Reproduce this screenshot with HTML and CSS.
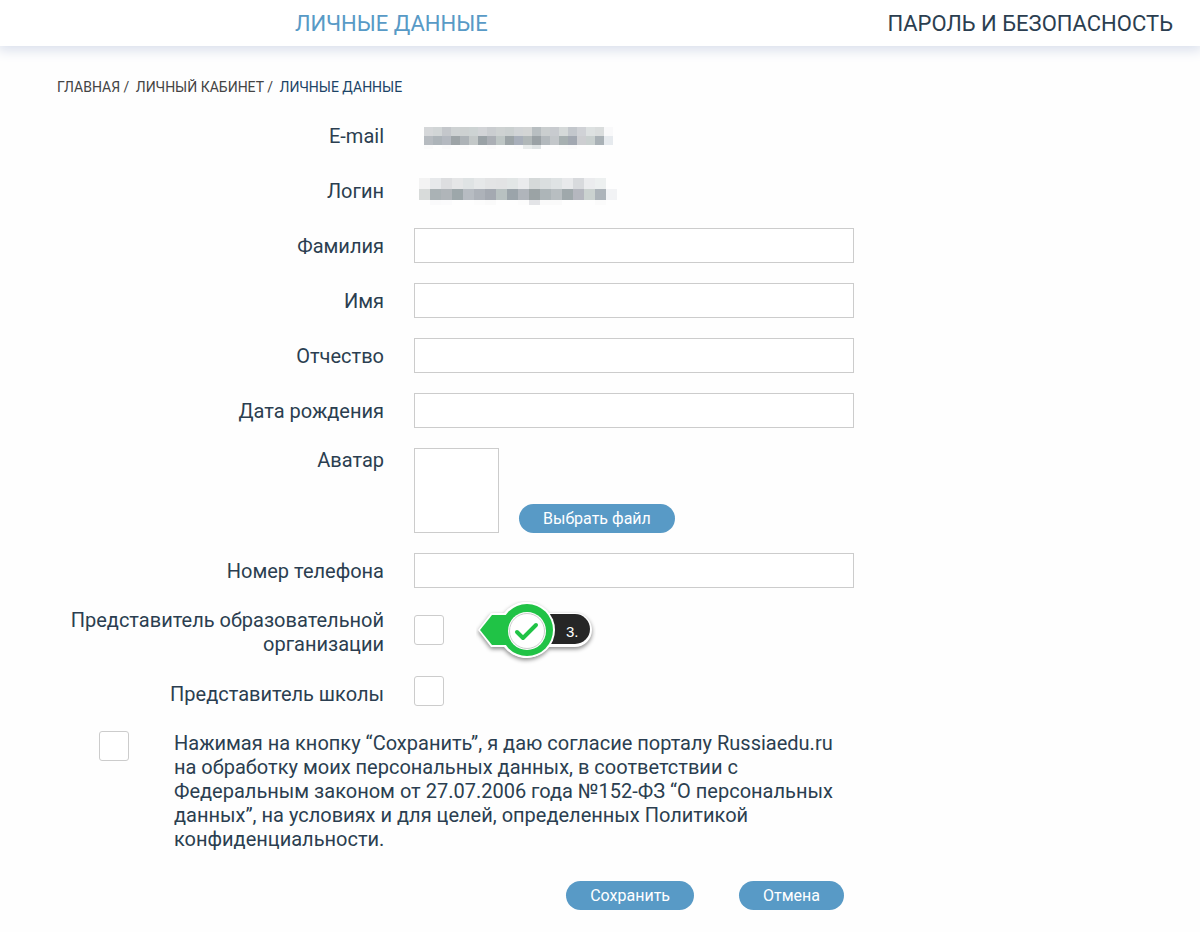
FILE: index.html
```html
<!DOCTYPE html>
<html lang="ru">
<head>
<meta charset="UTF-8">
<meta name="viewport" content="width=device-width, initial-scale=1.0">
<title>Личные данные</title>
<link rel="stylesheet" href="styles.css">
</head>
<body>

<nav class="tabs">
  <a href="#" class="active">Личные данные</a>
  <a href="#">Пароль и безопасность</a>
</nav>

<main class="content">
  <div class="breadcrumbs">
    <a href="#">Главная</a> <span>/</span>
    <a href="#">Личный кабинет</a> <span>/</span>
    <a href="#" class="current">Личные данные</a>
  </div>

  <form class="profile">
    <div class="row">
      <span class="label">E-mail</span>
      <svg class="hiddenValue" id="email" width="210" height="35" shape-rendering="crispEdges" aria-hidden="true"></svg>
    </div>
    <div class="row">
      <span class="label">Логин</span>
      <svg class="hiddenValue" id="login" width="210" height="35" shape-rendering="crispEdges" aria-hidden="true"></svg>
    </div>
    <div class="row">
      <label class="label" for="surname">Фамилия</label>
      <input type="text" class="field" id="surname">
    </div>
    <div class="row">
      <label class="label" for="name">Имя</label>
      <input type="text" class="field" id="name">
    </div>
    <div class="row">
      <label class="label" for="patronymic">Отчество</label>
      <input type="text" class="field" id="patronymic">
    </div>
    <div class="row">
      <label class="label" for="birthday">Дата рождения</label>
      <input type="text" class="field" id="birthday">
    </div>
    <div class="row rowTop">
      <label class="label" for="avatar">Аватар</label>
      <div class="avatarBox">
        <div class="avatar"></div>
        <button type="button" class="btn" id="avatar">Выбрать файл</button>
      </div>
    </div>
    <div class="row">
      <label class="label" for="phone">Номер телефона</label>
      <input type="text" class="field" id="phone">
    </div>
    <div class="row">
      <label class="label" for="eduRep">Представитель образовательной организации</label>
      <div class="checkBox">
        <input type="checkbox" class="check" id="eduRep">
        <div class="step">
          <svg width="120" height="64" viewBox="0 0 120 64" aria-hidden="true">
            <g class="stepShape">
              <path fill="#fff" d="M60 12H99A17 17 0 0 1 99 46H60Z"/>
              <path fill="#fff" d="M2 29 15 12H28A28 28 0 1 1 28 46H15Z"/>
            </g>
            <path fill="#262626" d="M60 13H99A15 15 0 0 1 99 43H60Z"/>
            <circle cx="51" cy="29" r="28" fill="#fff"/>
            <path fill="#20c346" d="M4 29 16 14H32V44H16Z"/>
            <circle cx="51" cy="29" r="26" fill="#20c346"/>
            <circle cx="51" cy="30" r="19" fill="#fff"/>
            <circle cx="51" cy="30" r="17.5" fill="none" stroke="#ccc"/>
            <path d="M41 31 47 37 60 24" fill="none" stroke="#20c346" stroke-width="4" stroke-linecap="round" stroke-linejoin="round"/>
          </svg>
          <span class="stepNumber">3.</span>
        </div>
      </div>
    </div>
    <div class="row rowShort">
      <label class="label" for="schoolRep">Представитель школы</label>
      <input type="checkbox" class="check" id="schoolRep">
    </div>
    <div class="consent">
      <input type="checkbox" class="check" id="consent">
      <label for="consent">Нажимая на кнопку “Сохранить”, я даю согласие порталу Russiaedu.ru на обработку моих персональных данных, в соответствии с Федеральным законом от 27.07.2006 года №152-ФЗ “О персональных данных”, на условиях и для целей, определенных Политикой конфиденциальности.</label>
    </div>
    <div class="actions">
      <button type="submit" class="btn">Сохранить</button>
      <button type="reset" class="btn">Отмена</button>
    </div>
  </form>
</main>

<script src="mosaic.js"></script>
</body>
</html>
```
FILE: styles.css
```css
* {
  box-sizing: border-box;
}
body {
  margin: 0;
  background-color: #fefefe;
  color: #2b3e50;
  font-family: Roboto, sans-serif;
  font-size: 20px;
  line-height: 24px;
}
a {
  color: inherit;
  text-decoration: none;
}
.tabs {
  display: flex;
  justify-content: space-between;
  padding: 12px 27px 10px 295px;
  background-color: #fff;
  box-shadow: 0 2px 12px 2px #d8deeb;
  font-size: 22px;
  text-transform: uppercase;
}
.tabs .active {
  color: #589ac6;
}
.content {
  padding: 31px 57px 22px;
}
.breadcrumbs {
  color: #444;
  font-size: 14px;
  line-height: 20px;
  text-transform: uppercase;
}
.breadcrumbs span {
  margin-right: 3px;
}
.breadcrumbs .current {
  color: #1c4467;
}
.profile {
  display: flex;
  flex-direction: column;
  gap: 20px;
  max-width: 797px;
  margin-top: 21px;
}
.row {
  display: grid;
  grid-template-columns: 327px 1fr;
  column-gap: 30px;
  align-items: center;
  min-height: 35px;
}
.rowTop {
  align-items: start;
}
.rowShort {
  min-height: 30px;
}
.rowShort .label {
  padding-top: 6px;
}
.label {
  text-align: right;
}
.field {
  width: 100%;
  height: 35px;
  padding: 0 10px;
  border: 1px solid #ccc;
  background-color: #fff;
  color: inherit;
  font: inherit;
}
.avatarBox {
  display: flex;
  align-items: flex-end;
  gap: 20px;
}
.avatar {
  width: 85px;
  height: 85px;
  border: 1px solid #ccc;
  background-color: #fff;
}
.btn {
  height: 29px;
  padding: 0 24px;
  border: none;
  border-radius: 15px;
  background-color: #589ac6;
  color: #fff;
  font-family: inherit;
  font-size: 16px;
  line-height: 29px;
  cursor: pointer;
}
.btn:hover {
  background-color: #4787b2;
}
.check {
  appearance: none;
  flex: none;
  width: 30px;
  height: 30px;
  margin: 0;
  border: 1px solid #ccc;
  border-radius: 3px;
  background-color: #fff;
}
.check:checked {
  background-color: #589ac6;
}
.checkBox {
  position: relative;
  display: flex;
  padding-bottom: 4px;
}
/* step marker lies over the form */
.step {
  position: absolute;
  top: -14px;
  left: 62px;
  height: 64px;
}
.step svg {
  display: block;
}
.stepShape {
  filter: drop-shadow(0 2px 2px #888);
}
.stepNumber {
  position: absolute;
  top: 19px;
  left: 90px;
  color: #fff;
  font-family: "Liberation Sans", Arial, sans-serif;
  font-size: 15px;
}
.consent {
  display: flex;
  align-items: flex-start;
  gap: 45px;
  margin-top: 5px;
  padding: 0 10px 0 42px;
}
.actions {
  display: flex;
  justify-content: flex-end;
  gap: 45px;
  margin-top: 10px;
  padding-right: 10px;
}
```
FILE: mosaic.js
```js
// Draw a masked value as rows of square cells, the last row is cut off at half height
function drawMosaic(id, size, left, top, rows) {
  var svg = document.getElementById(id);
  rows.forEach(function(row, y) {
    row.split(' ').forEach(function(color, x) {
      var cell = document.createElementNS('http://www.w3.org/2000/svg', 'rect');
      cell.setAttribute('x', left + x * size);
      cell.setAttribute('y', top + y * size);
      cell.setAttribute('width', size);
      cell.setAttribute('height', y === rows.length - 1 ? Math.floor(size / 2) : size);
      cell.setAttribute('fill', '#' + color);
      svg.appendChild(cell);
    });
  });
}

drawMosaic('email', 9, 10, 9, [
  'd5d7d9 d1d5d6 c4c7cb ced2d3 cdd1d1 cdd3d3 d2d4d7 cacdd0 ced2d2 cbd0d0 d1d4d6 d3d5d5 b8bec1 cacecf c8cbcf d5d9d9 c3c7cc d0d2d6 dde1e1 dadddd f9f9fa',
  'b6bbc0 adb4b9 b4b9c0 9da4a7 adb3b7 c3c8c8 9aa2a6 abafb5 bec6c5 9ca4a7 a8afba b0b7b8 9aa1a5 b3b9bd c3c7ca a7b0b1 a2a8b1 cdced1 c9d0cf a9b1b6 e6eaee',
  'fbfbfb fefefe fbfbfb fefefe fcfcfc fefefe fefefe fbfbfb fefefe fefefe fcfcfc e9ecec dfe3e4 fefefe fefefe fcfcfc fbfbfb fefefe fefefe fefefe fefefe'
]);
drawMosaic('login', 11, 5, 5, [
  'f3f3f3 e7e9eb dddee0 e5e6e7 dfe3e4 e6e8e9 e3e4e5 e2e3e4 e2e6e6 eaebed d5d9d9 dadedf dfe3e4 e8e9eb d8dadd ebecee edf0f0',
  'd8dbda aab2b5 b0b5b9 9da7aa b7bcc2 adb2b9 a4a9b1 b8c1c1 9ba4aa b0b5bb 9ba3a5 adb5b8 b8bec1 9fa8ab b5b7bf cbd2d0 adb4ba f2f3f5',
  'fefefe fafafb fbfbfc fefefe fefefe fcfcfc fafafa fefefe fefefe fcfcfc e3e4e7 fafafa fafafa fefefe fefefe fefefe fbfbfb'
]);
```
